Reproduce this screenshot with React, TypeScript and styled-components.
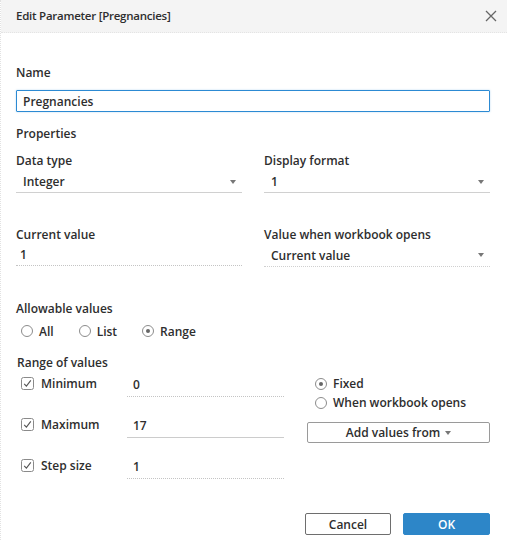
import { FunctionComponent, ReactNode } from "react";
import styled, { createGlobalStyle } from "styled-components";

const GlobalStyle = createGlobalStyle`
  body {
    margin: 0;
    background: #ffffff;
    font-family: "Open Sans", "Noto Sans", sans-serif;
    color: #333333;
  }
`;

const Dialog = styled.div`
  width: 507px;
  height: 540px;
  box-sizing: border-box;
  display: flex;
  flex-direction: column;
  background: #ffffff;
  border-left: 1px dotted #e2e2e2;
  overflow: hidden;
`;

const Header = styled.div`
  height: 33px;
  box-sizing: border-box;
  flex-shrink: 0;
  display: flex;
  align-items: center;
  justify-content: space-between;
  padding: 0 10px 0 15px;
  background: #f4f4f4;
  border-bottom: 1px dotted #e4e4e4;
`;

const Title = styled.div`
  font-size: 11.5px;
  font-weight: 600;
  letter-spacing: -0.25px;
  color: #2e2e2e;
  line-height: 16px;
`;

const CloseButton = styled.button`
  border: none;
  background: transparent;
  padding: 0;
  width: 12px;
  height: 12px;
  display: flex;
  align-items: center;
  justify-content: center;
  cursor: pointer;
`;

const Body = styled.div`
  flex: 1;
  display: flex;
  flex-direction: column;
  padding: 0 17px 0 15px;
`;

const Label = styled.div<{ $top?: number; $indent?: number }>`
  font-size: 12px;
  font-weight: 600;
  line-height: 16px;
  color: #2e2e2e;
  margin-top: ${(p) => p.$top ?? 0}px;
  padding-left: ${(p) => p.$indent ?? 0}px;
`;

const NameInput = styled.div`
  margin-top: 9px;
  height: 22px;
  box-sizing: border-box;
  border: 1px solid #2c8ad3;
  border-radius: 1px;
  box-shadow: 0 0 2px rgba(44, 138, 211, 0.35);
  padding-left: 6px;
  display: flex;
  align-items: center;
  font-size: 12px;
  font-weight: 600;
  color: #2e2e2e;
`;

const TwoCol = styled.div`
  display: grid;
  grid-template-columns: 226px 1fr;
  column-gap: 22px;
`;

const Field = styled.div`
  display: flex;
  flex-direction: column;
`;

const Select = styled.div<{ $top?: number; $height?: number; $line?: "dotted" | "solid" }>`
  margin-top: ${(p) => p.$top ?? 2}px;
  height: ${(p) => p.$height ?? 22}px;
  box-sizing: border-box;
  border-bottom: 1px ${(p) => p.$line ?? "solid"} #d0d0d0;
  padding: 0 6px 0 7px;
  display: flex;
  align-items: center;
  justify-content: space-between;
  font-size: 12px;
  font-weight: 600;
  color: #2e2e2e;
`;

const TextValue = styled.div`
  height: 23px;
  box-sizing: border-box;
  border-bottom: 1px dotted #c4c4c4;
  padding-left: 4px;
  display: flex;
  align-items: center;
  font-size: 12px;
  font-weight: 600;
  color: #2e2e2e;
`;

const Caret = styled.span`
  width: 0;
  height: 0;
  border-left: 3px solid transparent;
  border-right: 3px solid transparent;
  border-top: 4px solid #777777;
  display: inline-block;
`;

const RadioRow = styled.div`
  margin-top: 5px;
  height: 18px;
  display: flex;
  align-items: center;
  gap: 25px;
  padding-left: 5px;
`;

const Option = styled.label<{ $height?: number }>`
  display: flex;
  align-items: center;
  gap: 6px;
  height: ${(p) => p.$height ?? 18}px;
  font-size: 12px;
  font-weight: 600;
  color: #2e2e2e;
`;

const RadioDot = styled.span<{ $on?: boolean }>`
  width: 12px;
  height: 12px;
  box-sizing: border-box;
  border-radius: 50%;
  border: 1px solid #8c8c8c;
  background: #ffffff;
  display: flex;
  align-items: center;
  justify-content: center;
  flex-shrink: 0;
  &::after {
    content: "";
    width: 4px;
    height: 4px;
    border-radius: 50%;
    background: ${(p) => (p.$on ? "#666666" : "transparent")};
  }
`;

const RangeGrid = styled.div`
  display: grid;
  grid-template-columns: 268px 1fr;
  column-gap: 23px;
`;

const RangeRows = styled.div`
  display: flex;
  flex-direction: column;
  gap: 15px;
`;

const RangeRow = styled.div`
  height: 26px;
  display: grid;
  grid-template-columns: 106px 1fr;
  align-items: center;
  padding-left: 5px;
`;

const CheckLabel = styled.label`
  display: flex;
  align-items: center;
  gap: 7px;
  font-size: 12px;
  font-weight: 600;
  color: #2e2e2e;
  margin-top: -2px;
`;

const RangeValue = styled.div<{ $line: "dotted" | "solid" }>`
  height: 26px;
  box-sizing: border-box;
  border-bottom: 1px ${(p) => p.$line} ${(p) => (p.$line === "solid" ? "#cccccc" : "#c4c4c4")};
  padding: 2px 0 0 6px;
  display: flex;
  align-items: center;
  font-size: 12px;
  font-weight: 600;
  color: #2e2e2e;
`;

const RightCol = styled.div`
  display: flex;
  flex-direction: column;
  padding: 3px 0 0 8px;
`;

const AddButton = styled.button`
  margin: 10px 0 0 -8px;
  height: 21px;
  box-sizing: border-box;
  border: 1px solid #9a9a9a;
  border-radius: 2px;
  background: #ffffff;
  display: flex;
  align-items: center;
  justify-content: center;
  gap: 5px;
  font-family: inherit;
  font-size: 12px;
  font-weight: 600;
  color: #2e2e2e;
  padding: 0;
`;

const Footer = styled.div`
  margin-top: auto;
  display: flex;
  justify-content: flex-end;
  gap: 12px;
  padding-bottom: 5px;
`;

const FooterButton = styled.button<{ $primary?: boolean }>`
  width: ${(p) => (p.$primary ? 87 : 86)}px;
  height: 22px;
  box-sizing: border-box;
  border-radius: 2px;
  border: 1px solid ${(p) => (p.$primary ? "#2d86c8" : "#6e6e6e")};
  background: ${(p) => (p.$primary ? "#2d86c8" : "#ffffff")};
  color: ${(p) => (p.$primary ? "#ffffff" : "#2e2e2e")};
  font-family: inherit;
  font-size: 12px;
  font-weight: 600;
  padding: 0;
`;

const CheckBox: FunctionComponent = () => (
  <svg width="13" height="13" viewBox="0 0 13 13">
    <rect x="0.5" y="0.5" width="12" height="12" rx="2" fill="#fff" stroke="#8a8a8a" />
    <polyline points="3.2,6.8 5.4,9.2 9.8,3.4" fill="none" stroke="#555" strokeWidth="1.1" />
  </svg>
);

const Radio: FunctionComponent<{ on?: boolean; height?: number; children: ReactNode }> = ({
  on,
  height,
  children,
}) => (
  <Option $height={height}>
    <RadioDot $on={on} />
    {children}
  </Option>
);

const ranges = [
  { name: "Minimum", value: "0", line: "dotted" as const },
  { name: "Maximum", value: "17", line: "solid" as const },
  { name: "Step size", value: "1", line: "dotted" as const },
];

const App: FunctionComponent = () => {
  return (
    <>
      <GlobalStyle />
      <Dialog>
        <Header>
          <Title>Edit Parameter [Pregnancies]</Title>
          <CloseButton aria-label="Close">
            <svg width="12" height="12" viewBox="0 0 12 12">
              <path d="M1 1L11 11M11 1L1 11" stroke="#666" strokeWidth="1.3" fill="none" />
            </svg>
          </CloseButton>
        </Header>
        <Body>
          <Label $top={32}>Name</Label>
          <NameInput>Pregnancies</NameInput>
          <Label $top={14}>Properties</Label>
          <TwoCol>
            <Field>
              <Label $top={11}>Data type</Label>
              <Select>
                Integer
                <Caret />
              </Select>
              <Label $top={34}>Current value</Label>
              <TextValue>1</TextValue>
            </Field>
            <Field>
              <Label $top={11}>Display format</Label>
              <Select>
                1
                <Caret />
              </Select>
              <Label $top={34}>Value when workbook opens</Label>
              <Select $top={1} $height={23} $line="dotted">
                Current value
                <Caret />
              </Select>
            </Field>
          </TwoCol>
          <Label $top={34}>Allowable values</Label>
          <RadioRow>
            <Radio>All</Radio>
            <Radio>List</Radio>
            <Radio on>Range</Radio>
          </RadioRow>
          <Label $top={15} $indent={1}>
            Range of values
          </Label>
          <RangeGrid>
            <RangeRows>
              {ranges.map((r) => (
                <RangeRow key={r.name}>
                  <CheckLabel>
                    <CheckBox />
                    {r.name}
                  </CheckLabel>
                  <RangeValue $line={r.line}>{r.value}</RangeValue>
                </RangeRow>
              ))}
            </RangeRows>
            <RightCol>
              <Radio on height={19}>
                Fixed
              </Radio>
              <Radio height={19}>When workbook opens</Radio>
              <AddButton>
                Add values from
                <Caret />
              </AddButton>
            </RightCol>
          </RangeGrid>
          <Footer>
            <FooterButton>Cancel</FooterButton>
            <FooterButton $primary>OK</FooterButton>
          </Footer>
        </Body>
      </Dialog>
    </>
  );
};

export default App;
